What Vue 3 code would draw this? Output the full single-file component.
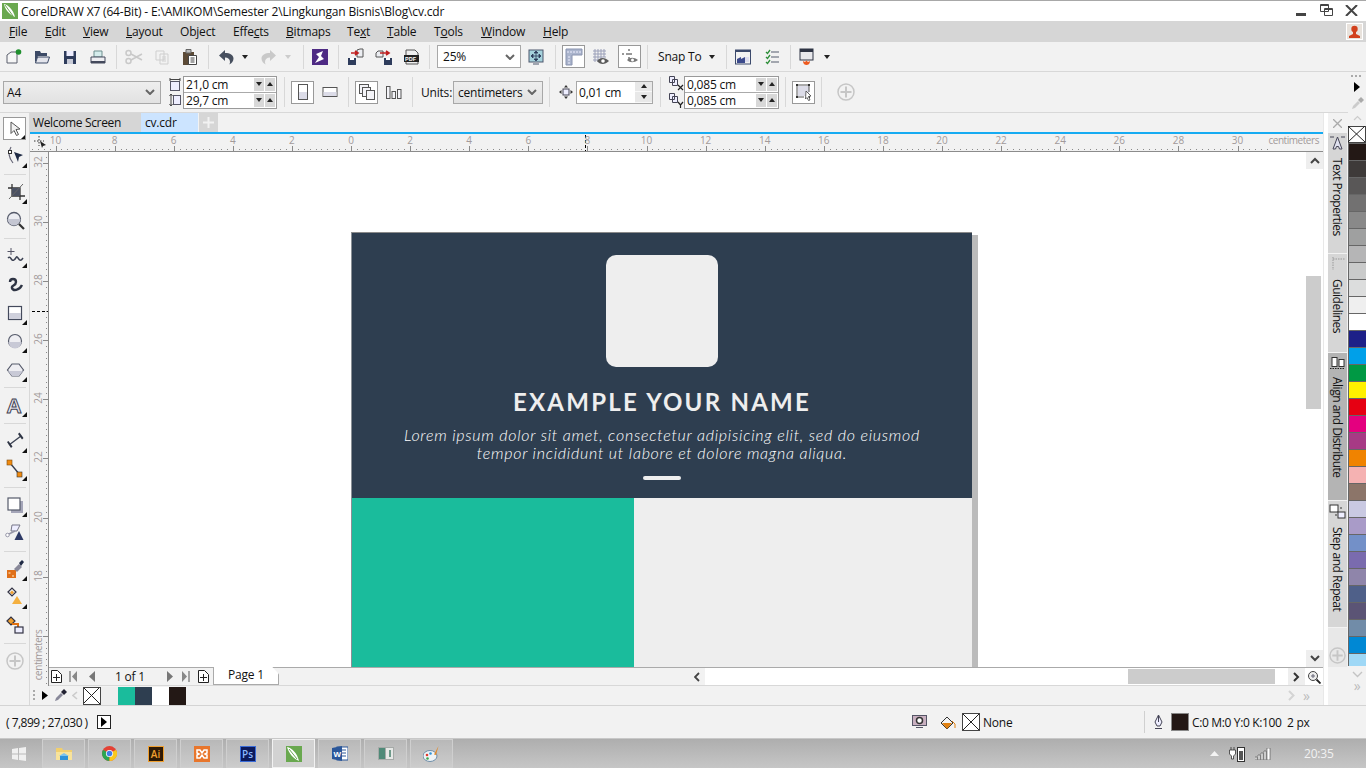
<script setup>
const menus = [
  { a: '', u: 'F', b: 'ile', w: 36 }, { a: '', u: 'E', b: 'dit', w: 38 }, { a: '', u: 'V', b: 'iew', w: 43 },
  { a: '', u: 'L', b: 'ayout', w: 54 }, { a: 'Object', u: '', b: '', w: 53 }, { a: 'Effe', u: 'c', b: 'ts', w: 53 },
  { a: '', u: 'B', b: 'itmaps', w: 61 }, { a: 'Te', u: 'x', b: 't', w: 40 }, { a: '', u: 'T', b: 'able', w: 47 },
  { a: 'T', u: 'o', b: 'ols', w: 47 }, { a: '', u: 'W', b: 'indow', w: 62 }, { a: '', u: 'H', b: 'elp', w: 40 }
]
const cm = 29.55
const hLabels = []
for (let v = -10; v <= 30; v += 2) hLabels.push({ t: Math.abs(v), x: 321 + cm * v })
const vLabels = []
for (let v = 32; v >= 18; v -= 2) vLabels.push({ t: v, y: 69 + (30 - v) * cm })
let hd = ''
for (let i = -55; i <= 155; i++) {
  const x = Math.round(321 + cm * i / 5)
  hd += i % 10 === 0 ? `M${x} 13v5` : `M${x} 16v1`
}
let vd = ''
for (let i = -12; i <= 120; i++) {
  const y = Math.round(70 + cm * i / 5)
  vd += i % 10 === 0 ? `M13 ${y}h5` : `M16 ${y}h1`
}
const colors = ['#231815', '#3e3a39', '#595757', '#727171', '#898989', '#9fa0a0', '#b5b5b6', '#c9caca', '#dcdddd', '#efefef', '#ffffff', '#1d2088', '#00a0e9', '#009944', '#fff100', '#e60012', '#e4007f', '#a73a85', '#f08300', '#f5b2b2', '#8c7569', '#c9c9e2', '#a99bc8', '#7390c8', '#7a6bae', '#8f85aa', '#4f6089', '#5b5475', '#718ca8', '#0088d4']
const docColors = ['#eeeeee', '#1abc9c', '#2e3e50', '#ffffff', '#231815']
</script>

<template>
  <div class="app">
    <div class="title">
      <svg class="logo" width="16" height="16" viewBox="0 0 16 16"><rect width="16" height="16" fill="#6aa84f"/><path d="M2 1c4 1 9 5 11 13C8 12 3 7 2 1z" fill="#fff"/><path d="M3 2l8 11" stroke="#6aa84f"/></svg>
      <span class="title-text">CorelDRAW X7 (64-Bit) - E:\AMIKOM\Semester 2\Lingkungan Bisnis\Blog\cv.cdr</span>
      <span class="grow"></span>
      <span class="min"></span>
      <svg class="restore" width="13" height="12" viewBox="0 0 13 12"><path d="M.5.5h8v7h-8zM4.5 4.5h8v7h-8z" fill="#fff" stroke="#444"/><path d="M.5 1.5h8M4.5 5.5h8" stroke="#444"/></svg>
      <svg class="close" width="13" height="11" viewBox="0 0 13 11"><path d="M1 0l11 11M12 0L1 11" stroke="#444" stroke-width="2"/></svg>
    </div>
    <div class="menu">
      <span v-for="m in menus" :key="m.a + m.u + m.b" class="mi" :style="{ width: m.w + 'px' }">{{ m.a }}<u>{{ m.u }}</u>{{ m.b }}</span>
      <span class="grow"></span>
      <svg class="user" width="17" height="17" viewBox="0 0 17 17"><rect x=".5" y=".5" width="16" height="16" fill="#e8e2dc" stroke="#fff"/><circle cx="8.5" cy="6" r="3.2" fill="#d2401c"/><path d="M7 8h3v3l4 2v2H3v-2l4-2z" fill="#d2401c"/></svg>
    </div>

    <div class="tb1">
      <span class="c28"><svg class="i" viewBox="0 0 18 18"><path d="M2 7l4-3h6v11H2z" fill="#f6f6f6" stroke="#5a5f6c"/><circle cx="13.5" cy="4" r="2.8" fill="#1f8f2d"/></svg></span>
      <span class="c28"><svg class="i" viewBox="0 0 18 18"><path d="M2 15V3h5l1 2h6v3H5l-3 7z" fill="#3c4a66"/><path d="M2.500 15l2-6h12l-2 6z" fill="#e4e5ec" stroke="#3c4a66"/></svg></span>
      <span class="c28"><svg class="i" viewBox="0 0 18 18"><path d="M3 3h12v13H3z" fill="#2e3c5c"/><path d="M5.500 3h7v5h-7z" fill="#eef"/><path d="M6 11h6v5H6z" fill="#c9ccd8"/></svg></span>
      <span class="c28"><svg class="i" viewBox="0 0 18 18"><path d="M5 3h8v6H5z" fill="#d5ecec" stroke="#6f8f8f"/><path d="M2 9h14v6H2z" fill="#eeeef2" stroke="#444a5c"/><path d="M2 13h14v2H2z" fill="#444a5c"/></svg></span>
      <span class="sep s1"></span>
      <span class="c28"><svg class="i" viewBox="0 0 18 18" fill="none" stroke="#c9c9c9" stroke-width="1.500"><circle cx="3.500" cy="5" r="2.500"/><circle cx="3.500" cy="13" r="2.500"/><path d="M6 6l11 6M6 12l11-6"/></svg></span>
      <span class="c28"><svg class="i" viewBox="0 0 18 18" fill="#f2f2f2" stroke="#cfcfcf"><path d="M3 3h8v9H3zM7 6h8v10H7z"/><path d="M9 9h4M9 11h4M9 13h4"/></svg></span>
      <span class="c28"><svg class="i" viewBox="0 0 18 18"><path d="M2 4h11v13H2z" fill="#5c4a36"/><path d="M5 1.500h5V5H5z" fill="#b9b9b9" stroke="#666"/><path d="M7.500 7.500h8v9h-8z" fill="#fff" stroke="#444"/><path d="M9.500 10h4M9.500 12h4M9.500 14h4" stroke="#444"/></svg></span>
      <span class="sep s1"></span>
      <span class="c28"><svg class="i" viewBox="0 0 18 18"><path d="M8 2L2 7.500 8 13V9.500c3 0 5 1.500 5 4.500 0 1-.3 2-1 2.500 3-1 4.500-3.500 4.500-6C16.500 7 13 5 8 5z" fill="#47505f"/></svg></span>
      <span class="c10"><i class="dn"></i></span>
      <span class="c28 ml5"><svg class="i" viewBox="0 0 18 18"><path d="M10 2l6 5.500L10 13V9.500c-3 0-5 1.500-5 4.500 0 1 .3 2 1 2.500-3-1-4.500-3.500-4.500-6C1.500 7 5 5 10 5z" fill="#c9c9c9"/></svg></span>
      <span class="c10"><i class="dn off"></i></span>
      <span class="sep ml10 mr2"></span>
      <span class="c28"><svg class="i" viewBox="0 0 18 18"><rect x="1" y="1" width="16" height="16" fill="#4e2a84"/><path d="M12 3L5 6l3 3-4 6 9-4-3-3 2-5z" fill="#fff"/></svg></span>
      <span class="sep s1"></span>
      <span class="c28"><svg class="i" viewBox="0 0 18 18"><path d="M10 2l3-1h3v8h-6z" fill="#eceef2" stroke="#555"/><path d="M1 10h8v7H1z" fill="#2e3c5c"/><path d="M3 10h4v2H3z" fill="#fff"/><path d="M4 5h6M8 3l3 2-3 2" fill="none" stroke="#c02020" stroke-width="1.600"/></svg></span>
      <span class="c28"><svg class="i" viewBox="0 0 18 18"><path d="M1 5l2-2h5v6H1z" fill="#eceef2" stroke="#555"/><path d="M9 10h8v7H9z" fill="#2e3c5c"/><path d="M11 10h4v2h-4z" fill="#fff"/><path d="M5 5h8M11 3l3 2-3 2" fill="none" stroke="#c02020" stroke-width="1.600"/></svg></span>
      <span class="c28"><svg class="i" viewBox="0 0 18 18"><path d="M3 2h9l3 3v11H3z" fill="#eee" stroke="#555"/><rect x="1" y="7" width="15" height="7" fill="#222"/><text x="2" y="13" class="pdf">PDF</text></svg></span>
      <span class="sep mr3 ml3"></span>
      <span class="select zoomsel ml4">25%<svg class="chev" width="10" height="6" viewBox="0 0 10 6"><path d="M1 1l4 4 4-4" fill="none" stroke="#666" stroke-width="2"/></svg></span>
      <span class="c28 ml1"><svg class="i" viewBox="0 0 18 18"><rect x="2" y="2" width="14" height="12" fill="#a5d2dc" stroke="#4c566c"/><path d="M9 4v8M5 8h8M4 8l2-2v4zM14 8l-2-2v4zM9 3l-2 2h4zM9 13l-2-2h4z" stroke="#2e3c5c" fill="#2e3c5c" stroke-width=".8"/><path d="M6 16h6" stroke="#4c566c"/></svg></span>
      <span class="sep ml5"></span>
      <span class="tog ml6"><svg class="i" viewBox="0 0 18 18"><path d="M1 1h16v6H7v10H1z" fill="#aab4cc" stroke="#8a94b0"/><path d="M3 3v2M6 3v2M9 3v2M12 3v2M15 3v2M3 9h2M3 12h2M3 15h2" stroke="#eef"/></svg></span>
      <span class="c22 ml5"><svg class="i" viewBox="0 0 18 18"><path d="M1 3h13M1 6h13M1 9h13M1 12h7M3 1v13M6 1v13M9 1v13M12 1v8" stroke="#9a9fb8" fill="none"/><path d="M5 13c3-4 8-4 12 0-4 4-9 4-12 0z" fill="#5a5a5a"/><circle cx="11" cy="13" r="1.800" fill="#fff"/></svg></span>
      <span class="tog ml6"><svg class="i" viewBox="0 0 18 18"><path d="M1 6h12M8 1v10" stroke="#333" stroke-dasharray="2 2"/><path d="M6 12c3-3 7-3 11 0-4 3-8 3-11 0z" fill="#777"/><circle cx="11.500" cy="12" r="1.500" fill="#fff"/></svg></span>
      <span class="sep ml6"></span>
      <span class="snap ml10">Snap To</span>
      <span class="c10 ml5"><i class="dn"></i></span>
      <span class="sep ml9"></span>
      <span class="c28 ml2"><svg class="i" viewBox="0 0 18 18"><rect x="1.500" y="2" width="15" height="14" fill="#f2f2f2" stroke="#3c4a6c"/><rect x="1.500" y="2" width="15" height="2" fill="#3c4a6c"/><path d="M3 15v-4l4-2v2l4-2v6z" fill="#3c4a8c"/><path d="M11 9h4v5h-4z" fill="#dde"/></svg></span>
      <span class="c28 ml1"><svg class="i" viewBox="0 0 18 18" fill="none"><path d="M3 4l1.500 1.500L7 2M3 9l1.500 1.500L7 7M3 14l1.500 1.500L7 12" stroke="#2e8f3a" stroke-width="1.300"/><path d="M8 4h8M8 9h8M8 14h8" stroke="#555c6c"/></svg></span>
      <span class="sep ml4"></span>
      <span class="c28 ml2"><svg class="i" viewBox="0 0 18 18"><rect x="2" y="1" width="13" height="11" fill="#e8e8ec" stroke="#2e3444"/><rect x="2" y="1" width="13" height="3" fill="#2e3444"/><path d="M5 13c0 3 2 4 3.500 4S12 16 12 13l-2 1-1.500-1.500L7 14z" fill="#ee5a20"/></svg></span>
      <span class="c10 ml1"><i class="dn"></i></span>
    </div>

    <div class="work">
      <div class="work-main">
        <div class="prop">
          <span class="select a4">A4<svg class="chev" width="10" height="6" viewBox="0 0 10 6"><path d="M1 1l4 4 4-4" fill="none" stroke="#666" stroke-width="2"/></svg></span>
          <span class="twoic ml8">
            <svg width="12" height="14" viewBox="0 0 12 14"><path d="M1 1v3M11 1v3M1 2.500h10" stroke="#444" fill="none"/><rect x="1.500" y="4.500" width="9" height="9" fill="#eef" stroke="#556"/></svg>
            <svg width="12" height="14" viewBox="0 0 12 14"><path d="M2 1v12M.5 3L2 1l1.500 2M.5 11L2 13l1.500-2" stroke="#444" fill="none"/><rect x="4.500" y="2.500" width="7" height="9" fill="#eef" stroke="#556"/></svg>
          </span>
          <span class="dbl ml2">
            <span class="dbl-row"><span class="val">21,0 cm</span><i class="sp"><b class="dn"></b></i><i class="sp"><b class="up"></b></i></span>
            <span class="dbl-row"><span class="val">29,7 cm</span><i class="sp"><b class="dn"></b></i><i class="sp"><b class="up"></b></i></span>
          </span>
          <span class="sep tall ml7"></span>
          <span class="tog ml6"><svg class="i" viewBox="0 0 18 18"><rect x="4.500" y="1.500" width="9" height="15" fill="#fff" stroke="#555"/><rect x="5" y="9" width="8" height="7" fill="#dcdce8"/></svg></span>
          <span class="c22 ml5"><svg class="i" viewBox="0 0 18 18"><rect x="2" y="4.500" width="14" height="9" fill="#fff" stroke="#555"/><rect x="2.500" y="9" width="13" height="4" fill="#dcdce8"/></svg></span>
          <span class="sep tall ml7"></span>
          <span class="tog ml6"><svg class="i" viewBox="0 0 18 18" fill="#f4f4f8" stroke="#555"><rect x="1.500" y="1.500" width="9" height="9"/><rect x="4.500" y="4.500" width="8" height="9"/><rect x="8.500" y="7.500" width="8" height="9"/></svg></span>
          <span class="c22 ml5"><svg class="i" viewBox="0 0 18 18" fill="#f4f4f8" stroke="#555"><rect x="1.500" y="3.500" width="3.500" height="12"/><rect x="7" y="8.500" width="3.500" height="7"/><rect x="12.500" y="6.500" width="3.500" height="9"/></svg></span>
          <span class="sep tall ml7"></span>
          <span class="lbl ml8">Units:</span>
          <span class="select units ml2">centimeters<svg class="chev" width="10" height="6" viewBox="0 0 10 6"><path d="M1 1l4 4 4-4" fill="none" stroke="#666" stroke-width="2"/></svg></span>
          <span class="sep tall ml6"></span>
          <span class="c15 ml8"><svg width="14" height="14" viewBox="0 0 14 14"><rect x="4" y="4" width="6" height="6" fill="#eef" stroke="#445"/><path d="M7 0l2 2.500H5zM7 14l2-2.500H5zM0 7l2.500-2v4zM14 7l-2.500-2v4z" fill="#333"/></svg></span>
          <span class="nudge ml3"><span class="nudge-val">0,01 cm</span><span class="nudge-sp"><i class="sp2"><b class="up"></b></i><i class="sp2"><b class="dn"></b></i></span></span>
          <span class="sep tall ml7"></span>
          <span class="twoic w15 ml8">
            <svg width="15" height="15" viewBox="0 0 15 15"><path d="M.5.500h5v6h-5zM3.500 3.500h5v6h-5z" fill="#eef" stroke="#445"/><path d="M9 9l5 5M14 9l-5 5" stroke="#222" stroke-width="1.200"/></svg>
            <svg width="15" height="15" viewBox="0 0 15 15"><path d="M.5.500h5v6h-5zM3.500 3.500h5v6h-5z" fill="#eef" stroke="#445"/><path d="M9 9l2.500 3L14 9M11.500 12v3" stroke="#222" fill="none" stroke-width="1.200"/></svg>
          </span>
          <span class="dbl dup">
            <span class="dbl-row"><span class="val">0,085 cm</span><i class="sp"><b class="dn"></b></i><i class="sp"><b class="up"></b></i></span>
            <span class="dbl-row"><span class="val">0,085 cm</span><i class="sp"><b class="dn"></b></i><i class="sp"><b class="up"></b></i></span>
          </span>
          <span class="sep tall ml6"></span>
          <span class="tog ml6"><svg class="i" viewBox="0 0 18 18"><rect x="3" y="3" width="11" height="10" fill="#dcdce8"/><path d="M1 1h2v2H1zM13 1h2v2h-2zM1 13h2v2H1zM13 13h2v2h-2z" fill="#333"/><path d="M3 2h10M2 3v10M14 3v6M3 14h6" stroke="#555"/><path d="M11 8l5 5-2.500.5L15 17l-1.500.5-1.500-3-1.500 1.500z" fill="#fff" stroke="#444" stroke-width=".8"/></svg></span>
          <span class="sep tall ml6"></span>
          <svg class="plus ml15" width="18" height="18" viewBox="0 0 18 18"><circle cx="9" cy="9" r="8" fill="none" stroke="#c6c6c6" stroke-width="1.500"/><path d="M9 3.500v11M3.500 9h11" stroke="#c6c6c6" stroke-width="2"/></svg>
        </div>

        <div class="body">
          <div class="toolbox">
            <span class="pick"><svg width="20" height="20" viewBox="0 0 20 20"><path d="M6 3l9 7-4 .5 2.500 5-2 1-2.500-5-3 3z" fill="#f2f2f2" stroke="#555"/><path d="M20 16v4h-4z" fill="#111"/></svg></span>
            <span class="t mt2"><svg class="ti" viewBox="0 0 24 24"><path d="M8 3C5 8 6 14 10 19" fill="none" stroke="#667" stroke-width="1.200"/><rect x="5.500" y="6.500" width="3" height="3" fill="#fff" stroke="#333"/><path d="M11 8l9 3-4 2-1 5z" fill="#1f2a44"/><path d="M24 19v5h-5z" fill="#111"/></svg></span>
            <span class="tsep"></span>
            <span class="t"><svg class="ti" viewBox="0 0 24 24"><path d="M9 4v12h13" fill="none" stroke="#333" stroke-width="1.300"/><path d="M5 8h12v12" fill="none" stroke="#333" stroke-width="1.300"/><rect x="9" y="8" width="8" height="8" fill="#4b5162"/><path d="M20 4L6 19" stroke="#666" stroke-width="1"/><path d="M24 19v5h-5z" fill="#111"/></svg></span>
            <span class="t"><svg class="ti" viewBox="0 0 24 24"><circle cx="11" cy="11" r="6.500" fill="#ecedf2" stroke="#555a6a" stroke-width="1.300"/><path d="M4.500 11h13a6.500 6.500 0 0 1-13 0z" fill="#c4c6d2"/><path d="M16 16l5 5" stroke="#333" stroke-width="2.200"/></svg></span>
            <span class="tsep"></span>
            <span class="t"><svg class="ti" viewBox="0 0 24 24"><path d="M8 4v7M4.500 7.500h7" stroke="#556" stroke-width="1"/><path d="M5 14c3-3 3 4 6 2s2-5 4-2 3 3 5 0" fill="none" stroke="#3b4152" stroke-width="1.500"/><path d="M24 19v5h-5z" fill="#111"/></svg></span>
            <span class="t"><svg class="ti" viewBox="0 0 24 24"><path d="M7 10c0-4 6-4 6 0s-5 3-4 6c1 3 7 3 10-3" fill="none" stroke="#2e3444" stroke-width="2.400"/></svg></span>
            <span class="t"><svg class="ti" viewBox="0 0 24 24"><rect x="5.500" y="5.500" width="13" height="13" fill="#fff" stroke="#444a5c" stroke-width="1.200"/><rect x="6" y="12" width="12" height="6" fill="#cfd0dc"/><path d="M24 19v5h-5z" fill="#111"/></svg></span>
            <span class="t"><svg class="ti" viewBox="0 0 24 24"><circle cx="12" cy="12" r="6.500" fill="#eeeef2" stroke="#555a6a" stroke-width="1.200"/><path d="M5.500 13h13a6.500 6.500 0 0 1-13 0z" fill="#c8c9d6"/><path d="M24 19v5h-5z" fill="#111"/></svg></span>
            <span class="t"><svg class="ti" viewBox="0 0 24 24"><path d="M9 6h7l4.500 6-4.500 6H9l-4.500-6z" fill="#eeeef2" stroke="#555a6a" stroke-width="1.200"/><path d="M5 13h15l-4 5H9z" fill="#c8c9d6"/><path d="M24 19v5h-5z" fill="#111"/></svg></span>
            <span class="tsep"></span>
            <span class="t"><svg class="ti" viewBox="0 0 24 24"><text x="3.500" y="20" class="bigA">A</text><path d="M24 19v5h-5z" fill="#111"/></svg></span>
            <span class="tsep"></span>
            <span class="t"><svg class="ti" viewBox="0 0 24 24"><path d="M6 16L18 7" stroke="#3b4152" stroke-width="1.300"/><path d="M4 13l4 6 1.500-1.500-4-5.500zM15 5l4 5.500 1.500-1.500-4-5.500z" fill="#2e3444"/><path d="M24 19v5h-5z" fill="#111"/></svg></span>
            <span class="t"><svg class="ti" viewBox="0 0 24 24"><path d="M7 6l10 12" stroke="#333a4c" stroke-width="1.300"/><rect x="4" y="3" width="5" height="5" fill="#f08a10" stroke="#7a4a10" stroke-width=".6"/><rect x="14" y="15" width="5" height="5" fill="#f08a10" stroke="#333" stroke-width=".6"/><path d="M24 19v5h-5z" fill="#111"/></svg></span>
            <span class="tsep"></span>
            <span class="t"><svg class="ti" viewBox="0 0 24 24"><rect x="8" y="8" width="12" height="12" fill="#a4a5b8"/><rect x="5" y="5" width="12" height="12" fill="#fff" stroke="#555a6a" stroke-width="1.200"/><path d="M24 19v5h-5z" fill="#111"/></svg></span>
            <span class="t"><svg class="ti" viewBox="0 0 24 24"><path d="M9 4h8l-3 6H8z" fill="#eef" stroke="#778" /><path d="M4 14l8-4" stroke="#99a" stroke-width="1.400"/><circle cx="4.500" cy="14" r="1.800" fill="#fff" stroke="#99a"/><path d="M16 10l4.500 9h-9z" fill="#2e3a66"/></svg></span>
            <span class="tsep"></span>
            <span class="t"><svg class="ti" viewBox="0 0 24 24"><path d="M4 13h9v8H4z" fill="#e0701a"/><path d="M5.500 15h2v2h-2zM9 18h2v2H9z" fill="#f2b070"/><path d="M11 12l5-5 3 3-5 5z" fill="#889"/><path d="M16 6l3-3 2 2-3 4z" fill="#1f2a44"/><path d="M24 19v5h-5z" fill="#111"/></svg></span>
            <span class="t"><svg class="ti" viewBox="0 0 24 24"><path d="M5 7l4-4 4 4-4 4z" fill="#eee" stroke="#334" stroke-width="1.200"/><path d="M7 7.500l2-2 2 2-2 2z" fill="#f0a030"/><path d="M14 11l5 8H9z" fill="#f4b040"/><path d="M24 19v5h-5z" fill="#111"/></svg></span>
            <span class="t"><svg class="ti" viewBox="0 0 24 24"><path d="M4 7l4-4 4 4-4 4z" fill="#f0a030" stroke="#334" stroke-width="1.200"/><path d="M9 10h6v6" fill="none" stroke="#e07010" stroke-width="2"/><rect x="12" y="13" width="8" height="6" fill="#eef" stroke="#334" stroke-width="1.200"/></svg></span>
            <span class="tsep"></span>
            <svg class="tplus" width="18" height="18" viewBox="0 0 18 18"><circle cx="9" cy="9" r="8" fill="none" stroke="#c6c6c6" stroke-width="1.500"/><path d="M9 3.500v11M3.500 9h11" stroke="#c6c6c6" stroke-width="2"/></svg>
          </div>

          <div class="doc">
            <div class="tabs">
              <span class="tab welcome">Welcome Screen</span>
              <span class="tab cv">cv.cdr</span>
              <span class="tab plus-tab"><svg width="11" height="11" viewBox="0 0 11 11"><path d="M5.500 0v11M0 5.500h11" stroke="#f2f2f2" stroke-width="2"/></svg></span>
            </div>
            <div class="hruler">
              <svg class="corner" width="14" height="12" viewBox="0 0 14 12"><path d="M0 5h10M5 0v10" stroke="#333" stroke-dasharray="1.500 1.500"/><path d="M6 5l6 4-3 1-1 2z" fill="#222"/></svg>
              <svg class="rticks" width="1293" height="18"><path :d="hd" stroke="#8a8a8a" shape-rendering="crispEdges"/><path d="M555 2v16" stroke="#000" stroke-dasharray="3 2" shape-rendering="crispEdges"/></svg>
              <span v-for="l in hLabels" :key="l.x" class="hl" :style="{ left: l.x + 'px' }">{{ l.t }}</span>
              <span class="hunit">centimeters</span>
            </div>
            <div class="lower">
              <div class="vruler">
                <svg class="rticks" width="19" height="534"><path :d="vd" stroke="#8a8a8a" shape-rendering="crispEdges"/><path d="M2 159h16" stroke="#000" stroke-dasharray="3 2" shape-rendering="crispEdges"/></svg>
                <span v-for="l in vLabels" :key="l.y" class="vl" :style="{ top: l.y + 'px' }">{{ l.t }}</span>
                <span class="vunit">centimeters</span>
              </div>
              <div class="viewport">
                <div class="canvas-row">
                  <div class="canvas">
                    <div class="page">
                      <div class="hero">
                        <div class="photo"></div>
                        <h1 class="name">EXAMPLE YOUR NAME</h1>
                        <p class="lorem">Lorem ipsum dolor sit amet, consectetur adipisicing elit, sed do eiusmod<br>tempor incididunt ut labore et dolore magna aliqua.</p>
                        <div class="rule"></div>
                      </div>
                      <div class="cols"><div class="col-green"></div><div class="col-grey"></div></div>
                    </div>
                  </div>
                  <div class="vscroll">
                    <span class="arrowbox"><svg width="10" height="7" viewBox="0 0 10 7"><path d="M1 6l4-4 4 4" fill="none" stroke="#444" stroke-width="2"/></svg></span>
                    <span class="vthumb"></span>
                    <span class="grow"></span>
                    <span class="arrowbox"><svg width="10" height="7" viewBox="0 0 10 7"><path d="M1 1l4 4 4-4" fill="none" stroke="#444" stroke-width="2"/></svg></span>
                  </div>
                </div>
                <div class="nav">
                  <svg class="nic n1" width="11" height="13" viewBox="0 0 11 13"><path d="M.5.500h6l4 4v8H.5z" fill="#fff" stroke="#222"/><path d="M5.500 4v7M2 7.500h7" stroke="#222"/></svg>
                  <svg class="nic n2" width="8" height="11" viewBox="0 0 8 11"><path d="M1 0v11" stroke="#888" stroke-width="1.500"/><path d="M8 0v11L3 5.500z" fill="#888"/></svg>
                  <svg class="nic n3" width="6" height="11" viewBox="0 0 6 11"><path d="M6 0v11L0 5.500z" fill="#777"/></svg>
                  <span class="pagecount">1 of 1</span>
                  <svg class="nic n4" width="6" height="11" viewBox="0 0 6 11"><path d="M0 0v11l6-5.500z" fill="#777"/></svg>
                  <svg class="nic n5" width="8" height="11" viewBox="0 0 8 11"><path d="M7 0v11" stroke="#888" stroke-width="1.500"/><path d="M0 0v11l5-5.500z" fill="#888"/></svg>
                  <svg class="nic n6" width="11" height="13" viewBox="0 0 11 13"><path d="M.5.500h6l4 4v8H.5z" fill="#fff" stroke="#222"/><path d="M5.500 4v7M2 7.500h7" stroke="#222"/></svg>
                  <span class="pagetab">Page 1</span>
                  <span class="hbar">
                    <span class="harrow"><svg width="6" height="10" viewBox="0 0 6 10"><path d="M5 1L1 5l4 4" fill="none" stroke="#444" stroke-width="1.800"/></svg></span>
                    <span class="grow"></span>
                    <span class="hthumb"></span>
                    <span class="harrow r"><svg width="7" height="10" viewBox="0 0 7 10"><path d="M1 1l4 4-4 4" fill="none" stroke="#333" stroke-width="2"/></svg></span>
                    <svg class="navzoom" width="14" height="14" viewBox="0 0 14 14"><circle cx="6" cy="6" r="4.500" fill="#eee" stroke="#444"/><path d="M4 6h4M6 4v4" stroke="#667"/><path d="M9.500 9.500l4 4" stroke="#222" stroke-width="1.800"/></svg>
                  </span>
                </div>
              </div>
            </div>
            <div class="docpal">
              <span class="dots"></span>
              <svg class="pa" width="6" height="9" viewBox="0 0 6 9"><path d="M0 0v9l6-4.500z" fill="#000"/></svg>
              <svg class="pe" width="13" height="13" viewBox="0 0 13 13"><path d="M1 12l1-3 5-5 2 2-5 5z" fill="#889"/><path d="M7 3l3-3 3 3-3 3z" fill="#223"/></svg>
              <svg class="pl" width="6" height="9" viewBox="0 0 6 9"><path d="M5 1L1 4.500 5 8" fill="none" stroke="#ccc" stroke-width="1.600"/></svg>
              <span class="none-sw"><svg width="17" height="17" viewBox="0 0 17 17"><path d="M0 0l17 17M17 0L0 17" stroke="#222"/></svg></span>
              <span v-for="c in docColors" :key="c" class="dsw" :style="{ background: c }"></span>
              <span class="grow"></span>
              <svg width="7" height="11" viewBox="0 0 7 11"><path d="M1 1l4.500 4.500L1 10" fill="none" stroke="#d4d4d4" stroke-width="2"/></svg>
              <span class="dblchev">»</span>
            </div>
          </div>

          <div class="strip"></div>
          <div class="docker">
            <span class="dclose"><svg width="9" height="9" viewBox="0 0 9 9"><path d="M0 0l9 9M9 0L0 9" stroke="#aaa" stroke-width="1.300"/></svg></span>
            <div class="dtab d1">
              <svg width="15" height="15" viewBox="0 0 15 15"><path d="M0 2h4M11 2h4M7.500 2L3 14h2.500l1-2.500h2l1 2.500H12z" fill="#dfe0ee" stroke="#445"/></svg>
              <span class="vt">Text Properties</span>
            </div>
            <div class="dtab d2">
              <svg width="15" height="13" viewBox="0 0 15 13"><path d="M3 0v13M3 2h12" stroke="#999" stroke-dasharray="1.500 1"/></svg>
              <span class="vt">Guidelines</span>
            </div>
            <div class="dtab d3">
              <svg width="15" height="13" viewBox="0 0 15 13"><path d="M0 12.500h15" stroke="#222" stroke-dasharray="1.500 1"/><rect x="2" y="1.500" width="5" height="9" fill="#fff" stroke="#333"/><rect x="9" y="3.500" width="5" height="7" fill="#fff" stroke="#333"/></svg>
              <span class="vt">Align and Distribute</span>
            </div>
            <div class="dtab d4">
              <svg width="17" height="15" viewBox="0 0 17 15"><rect x="1" y="1" width="8" height="7" fill="#fff" stroke="#333"/><rect x="9" y="8" width="7" height="6" fill="#eef" stroke="#333"/><path d="M6 11h2M11 4h2" stroke="#333"/></svg>
              <span class="vt">Step and Repeat</span>
            </div>
            <div class="dplus"><svg width="17" height="17" viewBox="0 0 18 18"><circle cx="9" cy="9" r="8" fill="none" stroke="#c6c6c6" stroke-width="1.500"/><path d="M9 3.500v11M3.500 9h11" stroke="#c6c6c6" stroke-width="2"/></svg></div>
          </div>
        </div>
      </div>

      <div class="palette">
        <span class="pdots"></span>
        <svg class="parr" width="6" height="10" viewBox="0 0 6 10"><path d="M0 0v10l6-5z" fill="#000"/></svg>
        <svg class="pdrop" width="13" height="14" viewBox="0 0 13 14"><path d="M1 13l1-3 5-5 2 2-5 5z" fill="#ccc"/><path d="M7 4l3-3 3 3-3 3z" fill="#aaa"/></svg>
        <svg class="pup" width="9" height="6" viewBox="0 0 9 6"><path d="M1 5l3.500-3.500L8 5" fill="none" stroke="#ccc" stroke-width="1.200"/></svg>
        <span class="swatch none"><svg width="17" height="16" viewBox="0 0 17 16"><path d="M0 0l17 16M17 0L0 16" stroke="#222"/></svg></span>
        <span v-for="c in colors" :key="c" class="swatch" :style="{ background: c }"></span>
        <span class="swatch last"></span>
        <svg class="pdown" width="11" height="7" viewBox="0 0 11 7"><path d="M1 1l4.500 4.500L10 1" fill="none" stroke="#c4c4c4" stroke-width="1.400"/></svg>
        <span class="pdbl">»</span>
      </div>
    </div>

    <div class="status">
      <span class="coords">( 7,899 ; 27,030 )</span>
      <span class="stbtn"><svg width="6" height="10" viewBox="0 0 6 10"><path d="M0 0v10l6-5z" fill="#000"/></svg></span>
      <span class="grow"></span>
      <svg class="st-disp" width="15" height="14" viewBox="0 0 15 14"><rect x=".5" y=".5" width="14" height="10" fill="#c9b0c0" stroke="#556"/><circle cx="7.500" cy="5.500" r="3" fill="#fff" stroke="#333" stroke-width="1.500"/><path d="M4 12.500h7" stroke="#556"/></svg>
      <svg class="st-fill" width="16" height="15" viewBox="0 0 16 15"><path d="M1 8l6-6 6 6-6 6z" fill="#f4f4f4" stroke="#333"/><path d="M2 8h10l-5 6z" fill="#e08010"/><path d="M12 6l3 3v4" fill="none" stroke="#e08010"/></svg>
      <span class="st-none"><svg width="18" height="18" viewBox="0 0 18 18"><path d="M0 0l18 18M18 0L0 18" stroke="#222"/></svg></span>
      <span class="st-text nonew">None</span>
      <span class="st-sep"></span>
      <svg class="st-pen" width="9" height="15" viewBox="0 0 9 15"><path d="M4.500 0L8 7 6 11H3L1 7z" fill="#eef" stroke="#445"/><path d="M4.500 1v6M1 13.500h7" stroke="#445"/></svg>
      <span class="st-black"></span>
      <span class="st-text outline">C:0 M:0 Y:0 K:100&nbsp; 2 px</span>
    </div>

    <div class="taskbar">
      <svg class="win" width="14" height="14" viewBox="0 0 14 14"><path d="M0 2l6-1v5.500H0zM7 1l7-1v6.500H7zM0 7.500h6V13l-6-1zM7 7.500h7V14l-7-1z" fill="#f0f0f0"/></svg>
      <span class="task t-first"><svg width="16" height="15" viewBox="0 0 16 15"><path d="M0 2h6l1 2h9v10H0z" fill="#f1cf6e"/><path d="M0 6h16v8H0z" fill="#f8e39a"/><path d="M4 10h8v4H4z" fill="#2f93d8"/><path d="M3 10l5-3 5 3z" fill="#7cc3ec"/></svg></span>
      <span class="task"><svg width="15" height="15" viewBox="0 0 16 16"><circle cx="8" cy="8" r="8" fill="#e44134"/><path d="M8 8L1.100 4A8 8 0 0 0 8 16z" fill="#2aa651"/><path d="M8 8v8a8 8 0 0 0 7-12z" fill="#f9c81e"/><circle cx="8" cy="8" r="3.800" fill="#fff"/><circle cx="8" cy="8" r="3" fill="#3f7fe5"/></svg></span>
      <span class="task"><span class="appbox ai">Ai</span></span>
      <span class="task"><svg width="16" height="16" viewBox="0 0 16 16"><rect width="16" height="16" fill="#e8762c"/><path d="M3 4h3l2 3 2-3h3v3l-2 1 2 1v3h-3L8 9l-2 3H3V9l2-1-2-1z" fill="none" stroke="#fff" stroke-width="1.500"/></svg></span>
      <span class="task"><span class="appbox ps">Ps</span></span>
      <span class="task active"><svg width="16" height="16" viewBox="0 0 16 16"><rect width="16" height="16" fill="#69a84f"/><path d="M1 1c5 1 10 6 12 14C8 13 3 8 1 1z" fill="#fff"/><path d="M3 3l8 10" stroke="#69a84f"/></svg></span>
      <span class="task"><svg width="16" height="15" viewBox="0 0 16 15"><rect x="5" y="1" width="11" height="13" fill="#fff" stroke="#2b579a"/><path d="M10 4h4M10 7h4M10 10h4" stroke="#2b579a"/><path d="M0 2l10-2v15L0 13z" fill="#2b579a"/><text x="1.500" y="10.500" class="wordw">W</text></svg></span>
      <span class="task"><svg width="16" height="13" viewBox="0 0 16 13"><rect width="16" height="13" fill="#a6aaa8"/><rect x="1" y="1" width="6" height="11" fill="#4f8a78"/><rect x="8" y="1" width="7" height="11" fill="#e6e8e6"/><rect x="11" y="3" width="2" height="7" fill="#6e9a8a"/></svg></span>
      <span class="task"><svg width="17" height="16" viewBox="0 0 17 16"><ellipse cx="7" cy="10" rx="7" ry="5.500" fill="#eef3f6" stroke="#6f8ea8"/><circle cx="4" cy="9" r="1.300" fill="#e03b2e"/><circle cx="7.500" cy="7.500" r="1.300" fill="#2f93d8"/><circle cx="4.500" cy="12.500" r="1.300" fill="#3da84f"/><path d="M15.500 0L13 9l-2-.6z" fill="#e08a2c"/></svg></span>
      <span class="grow"></span>
      <svg class="caret" width="9" height="5" viewBox="0 0 9 5"><path d="M4.500 0L9 5H0z" fill="#f4f4f4"/></svg>
      <svg class="plug" width="16" height="16" viewBox="0 0 16 16"><path d="M2 1v3M5 1v3M.5 4h6v4l-2 2v3h-2v-3l-2-2z" fill="#fff" stroke="#333" stroke-width=".8"/><rect x="8.500" y="1.500" width="7" height="14" fill="#fff" stroke="#333"/><rect x="10" y="5" width="4" height="9" fill="#555"/></svg>
      <svg class="signal" width="16" height="12" viewBox="0 0 16 12"><path d="M0 9h2v3H0zM3 7h2v5H3zM6 5h2v7H6zM9 3h2v9H9zM12 0h3v12h-3z" fill="#fff" stroke="#333" stroke-width=".5"/></svg>
      <span class="clock">20:35</span>
    </div>
  </div>
</template>

<style scoped>
.app { width: 1366px; height: 768px; overflow: hidden; display: flex; flex-direction: column; background: #f2f2f2; color: #111; font: 12px "Open Sans", "Noto Sans", sans-serif; letter-spacing: -.2px; }
.grow { flex: 1; }
svg { display: block; flex: none; }
.ml1 { margin-left: 1px; } .ml2 { margin-left: 2px; } .ml3 { margin-left: 3px; } .ml4 { margin-left: 4px; } .ml5 { margin-left: 5px; } .ml6 { margin-left: 6px; } .ml7 { margin-left: 7px; } .ml8 { margin-left: 8px; } .ml9 { margin-left: 9px; } .ml10 { margin-left: 10px; } .ml15 { margin-left: 15px; }
.mr2 { margin-right: 2px; } .mr3 { margin-right: 3px; } .mt2 { margin-top: 2px; }

.title { height: 21px; box-sizing: border-box; border-top: 1px solid #a8a8a8; background: #fff; display: flex; align-items: center; }
.logo { margin-left: 2px; }
.title-text { margin-left: 3px; font-size: 12px; white-space: nowrap; letter-spacing: -.17px; }
.min { width: 10px; height: 3px; background: #444; margin-top: 6px; }
.restore { margin-left: 14px; margin-top: -2px; }
.close { margin-left: 12px; margin-right: 8px; margin-top: -2px; }

.menu { height: 21px; background: #d6d6d6; display: flex; align-items: center; padding-left: 9px; }
.mi { flex: none; white-space: nowrap; }
.user { margin-right: 3px; }

.tb1 { height: 30px; box-sizing: border-box; border-bottom: 1px solid #d8d8d8; display: flex; align-items: center; }
.c28, .c22, .c10, .c15 { flex: none; display: flex; align-items: center; justify-content: center; height: 28px; }
.c28 { width: 28px; } .c22 { width: 22px; } .c10 { width: 10px; } .c15 { width: 15px; }
.i { width: 18px; height: 18px; }
.sep { flex: none; width: 1px; height: 24px; background: #d8d8d8; }
.sep.s1 { margin: 0 3px 0 4px; }
.sep.tall { height: 30px; }
.dn, .up { display: block; width: 0; height: 0; border-left: 3.500px solid transparent; border-right: 3.500px solid transparent; }
.dn { border-top: 4px solid #222; }
.up { border-bottom: 4px solid #222; }
.dn.off { border-top-color: #ccc; }
.select { flex: none; box-sizing: border-box; height: 23px; display: flex; align-items: center; justify-content: space-between; border: 1px solid #a8a8a8; background: linear-gradient(#eee, #e2e2e2); padding: 0 5px 0 3px; white-space: nowrap; }
.zoomsel { width: 84px; background: #fff; padding-left: 5px; }
.tog { flex: none; box-sizing: border-box; width: 23px; height: 23px; border: 1px solid #999; background: #fff; display: flex; align-items: center; justify-content: center; }
.snap { flex: none; width: 44px; white-space: nowrap; }
.pdf { font: bold 5.500px "Liberation Sans", sans-serif; fill: #fff; letter-spacing: 0; }

.work { flex: none; height: 633px; display: flex; }
.work-main { width: 1348px; flex: none; display: flex; flex-direction: column; }
.prop { height: 41px; flex: none; box-sizing: border-box; border-bottom: 1px solid #d8d8d8; display: flex; align-items: center; padding-left: 3px; }
.a4 { width: 158px; }
.twoic { flex: none; width: 12px; display: flex; flex-direction: column; gap: 2px; }
.twoic.w15 { width: 15px; }
.dbl { flex: none; width: 94px; box-sizing: border-box; height: 33px; border: 1px solid #999; background: #aaa; display: flex; flex-direction: column; gap: 1px; }
.dup { width: 95px; }
.dbl-row { flex: none; height: 15px; line-height: 15px; background: #fff; display: flex; align-items: center; padding: 0 0 0 2px; }
.val { flex: 1; white-space: nowrap; }
.sp { flex: none; width: 10px; height: 13px; margin-right: 1px; background: #d8d8d8; display: flex; align-items: center; justify-content: center; }
.lbl { flex: none; width: 30px; white-space: nowrap; }
.units { width: 90px; padding-left: 4px; }
.nudge { flex: none; box-sizing: border-box; width: 77px; height: 23px; border: 1px solid #a8a8a8; background: #fff; display: flex; align-items: center; padding-left: 2px; }
.nudge-val { flex: 1; white-space: nowrap; }
.nudge-sp { width: 17px; height: 21px; display: flex; flex-direction: column; background: #e8e8e8; }
.sp2 { flex: 1; display: flex; align-items: center; justify-content: center; border-bottom: 1px solid #f8f8f8; }

.body { flex: 1; min-height: 0; display: flex; }
.toolbox { flex: none; box-sizing: border-box; width: 30px; border-right: 1px solid #d8d8d8; padding-top: 4px; display: flex; flex-direction: column; align-items: center; }
.pick { box-sizing: border-box; width: 23px; height: 23px; border: 1px solid #999; background: #fff; display: flex; align-items: flex-end; justify-content: flex-end; margin-left: -1px; }
.t { flex: none; height: 28.500px; display: flex; align-items: center; justify-content: center; }
.ti { width: 24px; height: 24px; }
.tsep { flex: none; width: 22px; height: 1px; background: #d8d8d8; margin: 3px 0; }
.tplus { margin-top: 5px; }
.bigA { font: bold 21px "Liberation Sans", sans-serif; fill: #e8e8f0; stroke: #445; stroke-width: 1; letter-spacing: 0; }

.doc { flex: none; width: 1293px; display: flex; flex-direction: column; }
.tabs { flex: none; height: 19px; display: flex; }
.tab { flex: none; display: flex; align-items: center; white-space: nowrap; }
.welcome { width: 108px; padding-left: 3px; background: #d6d6d6; letter-spacing: -.35px; }
.cv { width: 53px; padding-left: 4px; background: #cce4ff; margin-right: 1px; }
.plus-tab { width: 19px; background: #d6d6d6; justify-content: center; }
.hruler { flex: none; position: relative; height: 20px; box-sizing: border-box; border-top: 2px solid #16abf2; border-bottom: 1px solid #8c8c8c; }
.corner { position: absolute; left: 4px; top: 2px; }
.rticks { position: absolute; left: 0; top: -1px; }
.hl { position: absolute; top: 0; font-size: 10px; line-height: 13px; color: #a29a9a; transform: translateX(-50%); letter-spacing: 0; }
.hunit { position: absolute; right: 4px; top: 0; font-size: 10px; line-height: 13px; color: #a29a9a; letter-spacing: -.45px; }
.lower { flex: 1; min-height: 0; display: flex; }
.vruler { flex: none; box-sizing: border-box; position: relative; width: 19px; border-right: 1px solid #8c8c8c; overflow: hidden; }
.vruler .rticks { top: 0; }
.vl, .vunit { position: absolute; left: 3px; font-size: 10px; line-height: 11px; color: #a29a9a; writing-mode: vertical-rl; transform: translateY(-50%) rotate(180deg); letter-spacing: 0; }
.vunit { left: 3px; top: 503px; letter-spacing: -.45px; }
.viewport { flex: 1; min-width: 0; display: flex; flex-direction: column; }
.canvas-row { flex: 1; min-height: 0; display: flex; background: #fff; }
.canvas { flex: 1; min-width: 0; overflow: hidden; padding: 80px 0 0 302px; }
.page { box-sizing: border-box; width: 621px; background: #fff; box-shadow: 6px 3px 0 #bbb; border-top: 1px solid #8a8a8a; border-left: 1px solid #8a9096; }
.hero { height: 265px; background: #2e3e50; box-sizing: border-box; padding-top: 22px; display: flex; flex-direction: column; align-items: center; color: #eee; }
.photo { flex: none; width: 112px; height: 112px; border-radius: 10px; background: #eee; }
.name { margin: 20px 0 0; font: 700 24px/30px Lato, sans-serif; letter-spacing: 2.250px; white-space: nowrap; }
.lorem { margin: 9px 0 0; font: italic 300 16px/18px Lato, sans-serif; letter-spacing: .74px; text-align: center; white-space: nowrap; color: #fff; }
.rule { flex: none; width: 38px; height: 4px; border-radius: 2px; background: #eee; margin-top: 14px; }
.cols { display: flex; height: 300px; }
.col-green { width: 282px; background: #1abc9c; }
.col-grey { flex: 1; background: #eee; }
.vscroll { flex: none; width: 17px; display: flex; flex-direction: column; background: #fff; }
.arrowbox { flex: none; height: 17px; background: #eee; display: flex; align-items: center; justify-content: center; }
.vthumb { flex: none; margin-top: 107px; width: 15px; height: 133px; background: #ccc; }

.nav { flex: none; height: 19px; box-sizing: border-box; border-bottom: 1px solid #d8d8d8; border-top: 1px solid #aaa; background: #f2f2f2; display: flex; align-items: center; position: relative; }
.n1 { margin-left: 2px; }
.n2 { margin-left: 7px; }
.n3 { margin-left: 12px; }
.pagecount { flex: none; width: 28px; margin-left: 20px; white-space: nowrap; }
.n4 { margin-left: 24px; }
.n5 { margin-left: 9px; }
.n6 { margin-left: 8px; }
.pagetab { flex: none; box-sizing: border-box; width: 66px; height: 18px; margin: -1px 0 0 4px; padding-left: 14px; line-height: 15px; background: #fff; border: 1px solid #aaa; border-top: 0; clip-path: polygon(0 0, 90% 0, 100% 40%, 100% 100%, 0 100%); }
.hbar { flex: 1; align-self: stretch; display: flex; align-items: center; margin-left: 409px; background: #fff; }
.harrow { flex: none; width: 17px; height: 100%; background: #f2f2f2; display: flex; align-items: center; justify-content: center; }
.hthumb { flex: none; width: 147px; height: 15px; background: #ccc; }
.harrow.r { margin-left: 13px; background: #eee; }
.navzoom { margin: 0 2px 0 2px; }
.hbar .grow { background: #fff; align-self: stretch; }

.docpal { flex: none; height: 19px; display: flex; align-items: center; padding-right: 10px; box-sizing: border-box; }
.dots { flex: none; width: 2px; height: 11px; margin-left: 3px; background: repeating-linear-gradient(#aaa 0 2px, transparent 2px 4px); }
.pa { margin-left: 7px; }
.pe { margin-left: 6px; }
.pl { margin-left: 5px; }
.none-sw { flex: none; box-sizing: border-box; margin-left: 5px; width: 18px; height: 18px; background: #fff; outline: 1px solid #444; outline-offset: -1px; }
.dsw { flex: none; width: 17px; height: 18px; }
.dblchev { margin-left: 8px; color: #bbb; font-size: 14px; width: 10px; }

.strip { flex: none; width: 5px; background: #fff; border-left: 1px solid #e8e8e8; box-sizing: border-box; }
.docker { flex: none; width: 19px; display: flex; flex-direction: column; }
.dclose { flex: none; height: 20px; display: flex; align-items: center; justify-content: center; }
.dtab { flex: none; box-sizing: border-box; display: flex; flex-direction: column; align-items: center; background: #d6d6d6; border-bottom: 1px solid #f2f2f2; padding-top: 3px; gap: 8px; overflow: hidden; }
.vt { writing-mode: vertical-rl; white-space: nowrap; letter-spacing: -.5px; }
.d1 { height: 121px; padding-top: 2px; }
.d2 { height: 99px; gap: 9px; }
.d3 { height: 148px; background: #b4b4b4; }
.d4 { height: 127px; }
.dplus { flex: none; height: 39px; background: #e8e8e8; display: flex; align-items: flex-end; justify-content: center; padding-bottom: 3px; box-sizing: border-box; }

.palette { flex: 1; min-width: 0; display: flex; flex-direction: column; align-items: center; }
.pdots { width: 12px; height: 2px; margin-top: 3px; background: repeating-linear-gradient(90deg, #aaa 0 2px, transparent 2px 4px); }
.parr { margin-top: 5px; }
.pdrop { margin-top: 4px; }
.pup { margin-top: 5px; margin-bottom: 5px; }
.swatch { flex: none; box-sizing: border-box; width: 18px; height: 17px; border-top: 1px solid #666; border-left: 1px solid #666; }
.swatch.none { background: #fff; border: 1px solid #444; }
.swatch.none svg { margin: -1px 0 0 -1px; }
.swatch.last { height: 13px; background: #9fd8f6; }
.pdown { margin-top: 5px; }
.pdbl { color: #bbb; font-size: 14px; line-height: 14px; margin-top: 1px; }

.status { flex: none; height: 33px; border-top: 1px solid #d4d4d4; box-sizing: border-box; display: flex; align-items: center; }
.coords { margin-left: 6px; width: 81px; white-space: nowrap; letter-spacing: -.5px; }
.stbtn { flex: none; margin-left: 10px; box-sizing: border-box; width: 14px; height: 14px; border: 1px solid #222; display: flex; align-items: center; justify-content: center; background: #fff; }
.st-disp { margin-right: 13px; }
.st-fill { margin-right: 6px; }
.st-none { flex: none; box-sizing: border-box; width: 18px; height: 18px; background: #fff; outline: 1px solid #444; outline-offset: -1px; }
.st-text { white-space: nowrap; }
.nonew { margin-left: 3px; width: 29px; }
.st-sep { flex: none; width: 1px; height: 22px; background: #d0d0d0; margin-left: 132px; }
.st-pen { margin-left: 9px; }
.st-black { flex: none; width: 18px; height: 18px; box-sizing: border-box; background: #231815; border: 1px solid #888; margin-left: 8px; }
.outline { margin-left: 3px; margin-right: 57px; width: 117px; letter-spacing: -.35px; }

.taskbar { flex: 1; display: flex; align-items: center; background: linear-gradient(#aeaeae, #c6c6c6); border-top: 1px solid #c8c8c8; box-sizing: border-box; }
.win { margin-left: 12px; margin-right: 13px; }
.task { flex: none; box-sizing: border-box; width: 43px; height: 29px; margin-right: 3px; border: 1px solid #cfcfcf; background: rgba(255,255,255,.12); display: flex; align-items: center; justify-content: center; }
.task.t-first { margin-left: 3px; }
.task.active { border-color: #f2f2f2; background: #d2d2d2; }
.appbox { box-sizing: border-box; width: 16px; height: 16px; font: 600 10px/14px "Open Sans", sans-serif; text-align: center; border: 1px solid; letter-spacing: 0; }
.ai { background: #2e1a05; border-color: #f0a030; color: #f0a030; }
.ps { background: #0c1a5c; border-color: #3a6cd8; color: #8ab8ff; }
.wordw { font: bold 8px "Liberation Sans", sans-serif; fill: #fff; letter-spacing: 0; }
.caret { margin-right: 10px; }
.plug { margin-right: 10px; }
.signal { margin-right: 33px; }
.clock { width: 28px; margin-right: 34px; color: #f2f2f2; white-space: nowrap; }
</style>

<style>
html, body { margin: 0; padding: 0; background: #f2f2f2; }
</style>
